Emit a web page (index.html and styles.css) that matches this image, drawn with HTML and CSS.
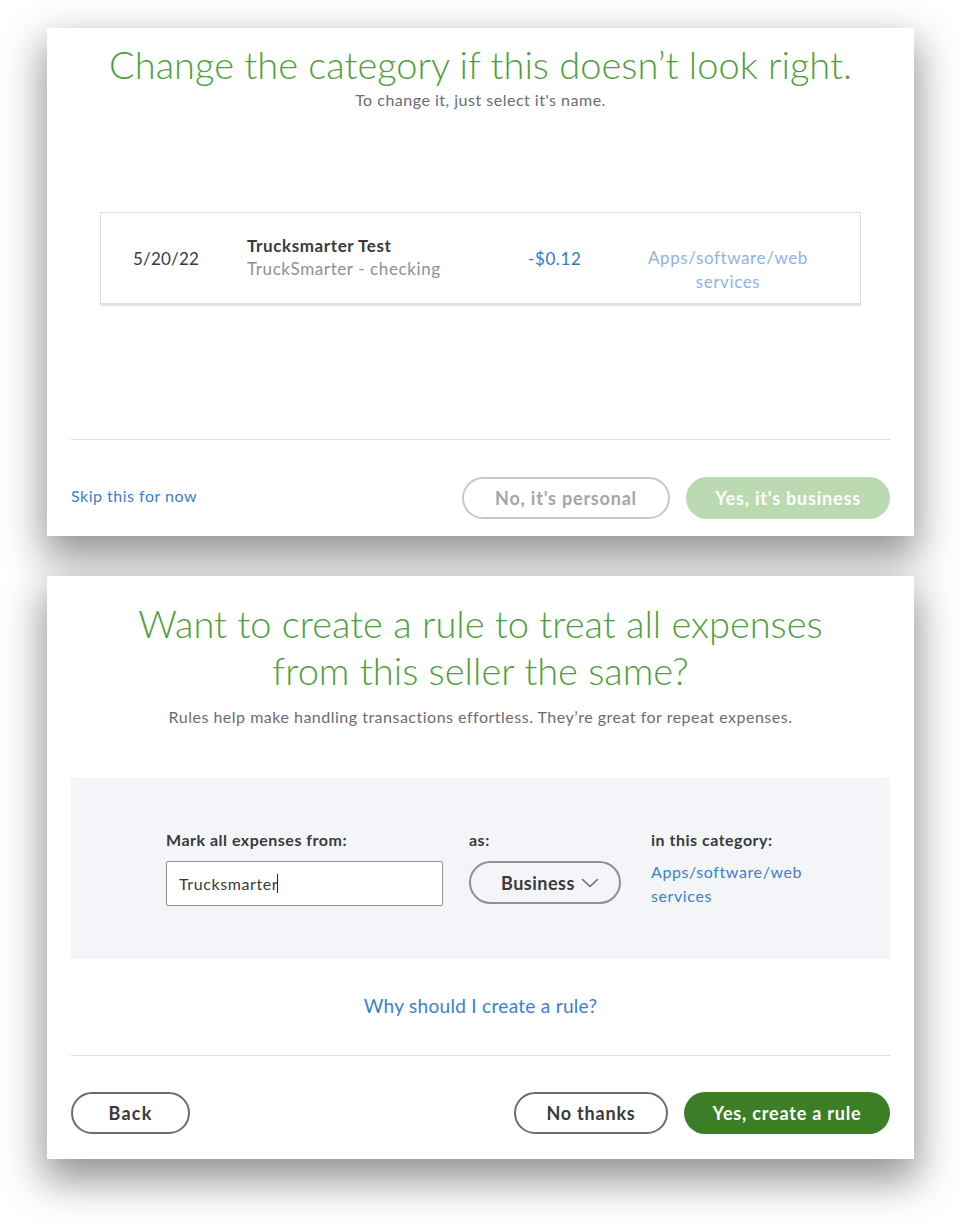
FILE: index.html
```html
<!DOCTYPE html>
<html lang="en">
<head>
<meta charset="utf-8">
<title>Categorize transaction</title>
<link rel="stylesheet" href="styles.css">
</head>
<body>
<main class="page">
  <section class="card card-first">
    <h1 class="title">Change the category if this doesn’t look right.</h1>
    <p class="subtitle">To change it, just select it's name.</p>

    <div class="txn">
      <div class="txn-date">5/20/22</div>
      <div class="txn-name">
        <div class="txn-payee">Trucksmarter Test</div>
        <div class="txn-account">TruckSmarter - checking</div>
      </div>
      <div class="txn-amount">-$0.12</div>
      <div class="txn-category">Apps/software/web services</div>
    </div>

    <hr class="divider divider-first">

    <div class="actions">
      <a class="link skip">Skip this for now</a>
      <div class="btn-group">
        <button class="btn btn-outline btn-disabled">No, it's personal</button>
        <button class="btn btn-primary-disabled">Yes, it's business</button>
      </div>
    </div>
  </section>

  <section class="card card-second">
    <h1 class="title title-rule">Want to create a rule to treat all expenses<br>from this seller the same?</h1>
    <p class="subtitle subtitle-rule">Rules help make handling transactions effortless. They’re great for repeat expenses.</p>

    <div class="panel">
      <div class="rule-grid">
        <div class="rule-label">Mark all expenses from:</div>
        <div class="rule-label">as:</div>
        <div class="rule-label">in this category:</div>

        <div class="input"><span class="input-text">Trucksmarter</span><span class="caret"></span></div>
        <div class="dropdown">
          <span>Business</span>
          <svg class="chevron" width="18" height="10" viewBox="0 0 18 10" aria-hidden="true">
            <polyline points="1.5,1.5 9,8.5 16.5,1.5" fill="none" stroke="#6b6c72" stroke-width="1.6" stroke-linecap="round" stroke-linejoin="round"/>
          </svg>
        </div>
        <a class="link rule-category">Apps/software/web services</a>
      </div>
    </div>

    <div class="why"><a class="link why-link">Why should I create a rule?</a></div>

    <hr class="divider divider-second">

    <div class="actions actions-second">
      <button class="btn btn-outline btn-dark btn-back">Back</button>
      <div class="btn-group">
        <button class="btn btn-outline btn-dark btn-nothanks">No thanks</button>
        <button class="btn btn-primary">Yes, create a rule</button>
      </div>
    </div>
  </section>
</main>
</body>
</html>
```

FILE: styles.css
```css
* { box-sizing: border-box; }

html, body {
  margin: 0;
  padding: 0;
  background: #ffffff;
}

body {
  font-family: "Lato", "Liberation Sans", sans-serif;
  color: #393a3d;
}

.page {
  padding: 28px 47px 66px;
  display: flex;
  flex-direction: column;
  gap: 40px;
}

.card {
  position: relative;
  background: #ffffff;
  box-shadow: 0 18px 38px 4px rgba(0, 0, 0, 0.42);
  padding: 0 24px;
}

.card-first { padding-top: 13px; padding-bottom: 17px; }
.card-second { padding-top: 24px; padding-bottom: 25px; z-index: 1; }

.title {
  margin: 0;
  font-weight: 300;
  font-size: 38px;
  line-height: 47px;
  color: #4f9f3d;
  text-align: center;
}

.subtitle {
  margin: 2px 0 0;
  font-size: 16px;
  line-height: 20px;
  letter-spacing: 0.5px;
  color: #6b6c72;
  text-align: center;
}

.subtitle-rule { margin-top: 13px; }

/* transaction row */
.txn {
  margin: 102px 29px 0;
  height: 92px;
  border: 1px solid #dcdde0;
  box-shadow: 0 2px 0 #e3e4e6;
  display: grid;
  grid-template-columns: 114px 281px 112px 176px;
  align-items: center;
  padding-left: 32px;
  font-size: 17px;
  letter-spacing: 0.6px;
}

.txn-date { color: #393a3d; letter-spacing: 0.2px; }
.txn-name { line-height: 23px; margin-top: -2px; }
.txn-payee { font-weight: 700; color: #393a3d; }
.txn-account { color: #8d9096; }
.txn-amount { color: #2f79c9; }
.txn-category {
  color: #8db4e6;
  text-align: center;
  line-height: 24px;
  margin-top: 24px;
}

.divider {
  border: 0;
  height: 1px;
  background: #dcdde0;
  margin: 0;
}

.divider-first { margin-top: 135px; }
.divider-second { margin-top: 37px; }

.actions {
  margin-top: 37px;
  display: flex;
  align-items: center;
  justify-content: space-between;
}

.actions-second { margin-top: 36px; }

.btn-group {
  display: flex;
  gap: 16px;
}

.btn {
  height: 42px;
  border-radius: 21px;
  font-family: inherit;
  font-size: 18px;
  font-weight: 700;
  letter-spacing: 0.8px;
  padding: 0;
  cursor: pointer;
}

.btn-outline {
  background: #ffffff;
  border: 2px solid #c6c7cb;
  color: #a4a5a9;
}

.btn-disabled { width: 208px; }

.btn-dark {
  border-color: #6b6c72;
  color: #393a3d;
}

.btn-back { width: 119px; letter-spacing: 1.2px; }
.btn-nothanks { width: 154px; }

.btn-primary-disabled {
  width: 204px;
  border: 0;
  background: #bbdab1;
  color: #ffffff;
}

.btn-primary {
  width: 206px;
  border: 0;
  background: #3b7e25;
  color: #ffffff;
}

.link {
  color: #3a80d0;
  text-decoration: none;
  cursor: pointer;
}

.skip {
  font-size: 16px;
  line-height: 20px;
  letter-spacing: 0.5px;
  margin-top: -4px;
}

/* rule panel */
.panel {
  margin-top: 51px;
  background: #f4f5f8;
  padding: 52px 0 51px 95px;
}

.rule-grid {
  display: grid;
  grid-template-columns: 277px 152px 200px;
  column-gap: 26px;
  row-gap: 11px;
}

.rule-grid > :nth-child(3),
.rule-grid > :nth-child(6) { margin-left: 4px; }

.rule-label {
  font-size: 16px;
  font-weight: 700;
  line-height: 20px;
  letter-spacing: 0.5px;
  color: #393a3d;
}

.input {
  height: 45px;
  border: 1px solid #8d9096;
  border-radius: 2px;
  background: #ffffff;
  display: flex;
  align-items: center;
  padding-left: 12px;
  font-size: 16px;
  letter-spacing: 0.6px;
  color: #393a3d;
}

.caret {
  display: inline-block;
  width: 1px;
  height: 19px;
  background: #222;
  margin-left: -1px;
}

.dropdown {
  height: 43px;
  border: 2px solid #8d9096;
  border-radius: 22px;
  display: flex;
  align-items: center;
  justify-content: center;
  gap: 6px;
  font-size: 18px;
  font-weight: 700;
  letter-spacing: 0.5px;
  color: #393a3d;
  padding-left: 10px;
}

.chevron { margin-top: 1px; }

.rule-category {
  font-size: 16px;
  line-height: 24px;
  letter-spacing: 0.6px;
  margin-top: -1px;
}

.why {
  margin-top: 35px;
  text-align: center;
}

.why-link {
  font-size: 19px;
  line-height: 24px;
  letter-spacing: 0.3px;
}
```
